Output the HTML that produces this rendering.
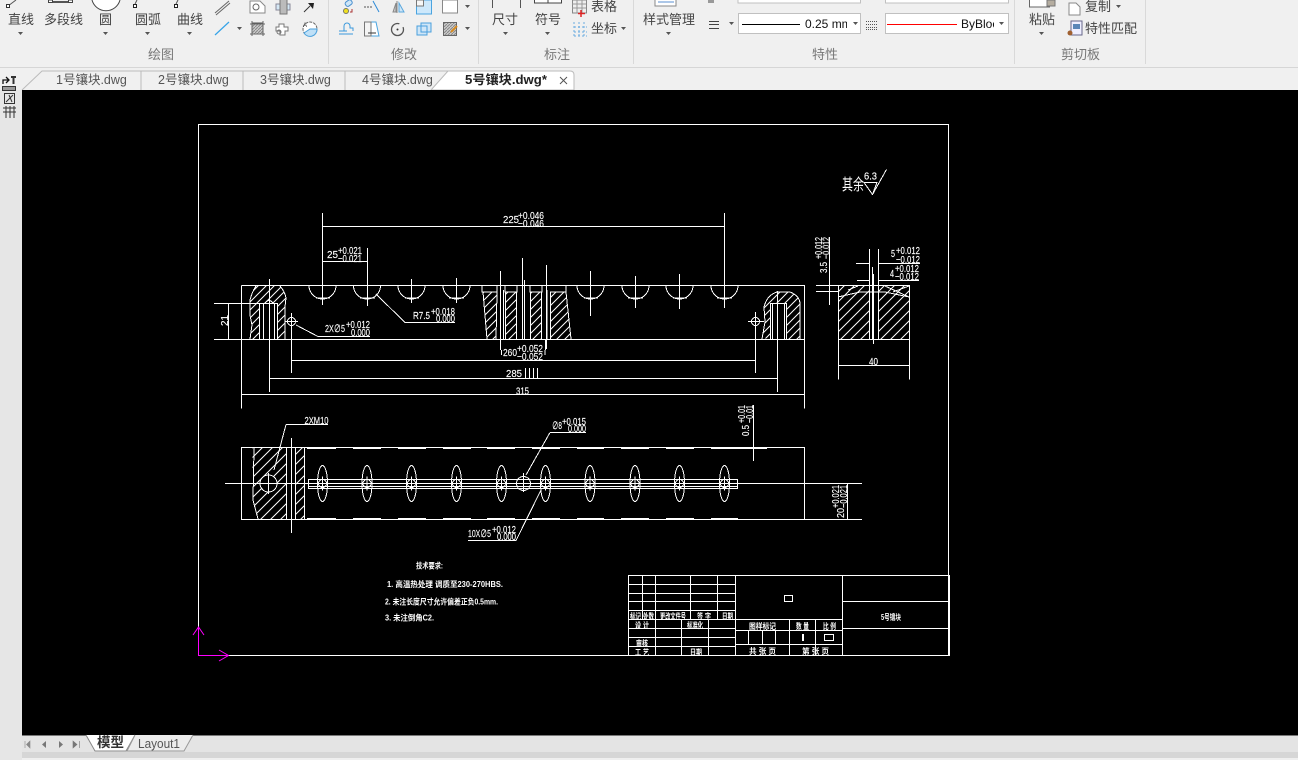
<!DOCTYPE html>
<html lang="zh-CN">
<head>
<meta charset="utf-8">
<title>CAD</title>
<style>
html,body{margin:0;padding:0;width:1298px;height:760px;overflow:hidden;background:#f0f0f0}
svg{position:absolute;left:0;top:0;display:block}
text{font-family:"Liberation Sans","Noto Sans CJK SC",sans-serif}
.l{font-size:13px;fill:#444}
.g{font-size:13px;fill:#777}
.t{font-size:12.5px;fill:#555}
.d{font-size:10.5px;fill:#fff;stroke:#fff;stroke-width:.15}
.m{font-size:8px;fill:#fff;font-weight:700}
.n{font-size:8px;fill:#fff;font-weight:700}
.w{fill:none;stroke:#fff;stroke-width:1}
.ic{fill:none;stroke:#666;stroke-width:1}
.bl{fill:none;stroke:#3aa0e0;stroke-width:1}
</style>
</head>
<body>
<svg width="1298" height="760" viewBox="0 0 1298 760" xmlns="http://www.w3.org/2000/svg">
<defs>
<pattern id="h" width="8" height="8" patternUnits="userSpaceOnUse"><path d="M-1 9L9 -1M-1 1L1 -1M7 9L9 7" stroke="#fff" stroke-width="1" fill="none"/></pattern>
<pattern id="h2" width="10" height="10" patternUnits="userSpaceOnUse"><path d="M-1 11L11 -1M-1 1L1 -1M9 11L11 9" stroke="#fff" stroke-width="1" fill="none"/></pattern>
<pattern id="sh" width="3" height="3" patternUnits="userSpaceOnUse"><rect width="3" height="3" fill="#ccc"/><path d="M0 3L3 0" stroke="#888"/></pattern>
<g id="ov"><ellipse cx="0" cy="0" rx="5" ry="18" class="w"/><circle r="4" class="w"/><path d="M-6 0H6M0 -7V7" class="w"/></g>
<path id="ar" d="M0 0h5l-2.500 3z" fill="#555"/>
</defs>

<!-- Ribbon -->
<rect width="1298" height="67" fill="#f0f0f0"/>
<rect y="67" width="1298" height="1" fill="#d6d6d6"/>
<rect y="68" width="1298" height="23" fill="#f0f0f0"/>
<rect x="0" y="90" width="22" height="670" fill="#e6e6e6"/>
<g fill="#d9d9d9"><rect x="328" width="1" height="64"/><rect x="478" width="1" height="64"/><rect x="633" width="1" height="64"/><rect x="1014" width="1" height="64"/><rect x="1145" width="1" height="64"/></g>

<!-- Draw big icons -->
<g class="ic" stroke="#444">
<path d="M8 6L16 0" stroke="#555" fill="none"/><rect x="6.500" y="4.500" width="3" height="3" fill="#fff" stroke="#333"/>
<path d="M49 2H73" stroke="#555" fill="none" stroke-width="2"/><rect x="48.500" y="0" width="4" height="2.500" fill="#fff" stroke="#444"/><rect x="68.500" y="0" width="4" height="2.500" fill="#fff" stroke="#444"/>
<path d="M92 0A14.500 14.500 0 0 0 120 0" fill="#fff" stroke="#444"/>
<path d="M135 4L137 0" fill="none" stroke="#555"/><rect x="133.500" y="4.500" width="3" height="3" fill="#fff" stroke="#222"/>
<path d="M176 4L178 0" fill="none" stroke="#555"/><rect x="174.500" y="4.500" width="3" height="3" fill="#fff" stroke="#222"/>
</g>
<path d="M215 13L229 1M216 15L230 3" stroke="#666" fill="none"/>
<path d="M215 35L229 22" stroke="#35a3e8" fill="none" stroke-width="1.200"/>
<use href="#ar" x="237" y="27"/>
<path d="M250 1H260L265 6V13H250Z" fill="#fff" stroke="#888"/><circle cx="256" cy="7" r="3" fill="none" stroke="#666"/>
<rect x="252" y="23" width="11" height="11" fill="url(#sh)" stroke="#555"/><path d="M250 24H265M250 34H265M252 21V36M263 21V36" stroke="#666" fill="none"/>
<path d="M276 4H290V10H276Z" fill="#d5e8f5" stroke="#889"/><path d="M280 0V14H287V0" fill="#bbb" stroke="#777"/>
<path d="M279 24h5v3h4v4h-3v4h-5v-4h-4v-4h3z" fill="#fff" stroke="#777"/><circle cx="279" cy="32" r="2" fill="none" stroke="#777"/>
<path d="M304 12L310 6" stroke="#333"/><path d="M308 3L314 3L313 9Z" fill="#222"/>
<circle cx="310" cy="29" r="7" fill="#fff" stroke="#666" stroke-dasharray="3 1"/><path d="M310 29H317A7 7 0 0 1 304 33Z" fill="#bfe0f7" stroke="#4aa0dc"/>
<text x="303" y="27" font-size="6" fill="#333">A</text>

<!-- Modify icons -->
<circle cx="346" cy="11" r="2.500" fill="#f0e020" stroke="#776"/><rect x="345" y="1" width="7" height="5" rx="2" transform="rotate(-35 348 3)" fill="#cfe6f7" stroke="#4a90d0"/><path d="M350 12H352V9" stroke="#a33" fill="none"/>
<path d="M364 7H372" stroke="#555" stroke-dasharray="2 1"/><path d="M373 1L379 12" stroke="#2d8ad8" fill="none"/>
<path d="M397 1V13M396 3L393 12H396Z" stroke="#888" fill="#ccc"/><path d="M399 3L404 12H399Z" fill="#cfe6f7" stroke="#5aa7dd"/>
<rect x="416.500" y="0" width="15" height="14" fill="#cde8fb" stroke="#4aa4e0"/><rect x="416.500" y="0" width="7" height="6" fill="#f7f7f7" stroke="#777"/>
<rect x="442.500" y="0" width="15" height="13" fill="#fff" stroke="#888"/><use href="#ar" x="465" y="5"/>
<path d="M339 34H353M339 31H347M344 31V26A3 3 0 0 1 350 26V28H353V31" fill="none" stroke="#3a99dc"/>
<path d="M364.500 22H376L379 36H364.500Z" fill="#fff" stroke="#4aa4e0"/><path d="M364.500 22H371V36H364.500Z" fill="#f4f4f4" stroke="#777"/><path d="M368 33H376" stroke="#333"/>
<circle cx="397.500" cy="29.500" r="6" fill="none" stroke="#555" stroke-width="1.300" stroke-dasharray="30 5"/><circle cx="397.500" cy="29.500" r="1" fill="#333"/>
<path d="M417 26H427V35H417ZM421 23H431V32H421Z" fill="#cfe6f7" stroke="#4a9fdc"/>
<rect x="443.500" y="22.500" width="13" height="13" fill="url(#sh)" stroke="#666"/><path d="M451 32L457 26" stroke="#d68a20" stroke-width="2"/><use href="#ar" x="465" y="27"/>

<!-- Annotation icons -->
<path d="M492.500 0V8M520.500 0V8" stroke="#555" fill="none"/>
<rect x="534.500" y="-8" width="27" height="11" fill="#fff" stroke="#444"/><path d="M548 -8V3" stroke="#444"/>
<rect x="572.500" y="0" width="14" height="13" fill="#eee" stroke="#888"/><path d="M572 4H586M572 8H586M577 0V13M582 0V13" stroke="#999"/><path d="M581 10V17M578 13.500H585" stroke="#d22" stroke-width="1.500"/>
<path d="M574 22V36M574 36H587M579 22V36M584 22V36M574 27H587M574 32H587" stroke="#6aace0" stroke-dasharray="2 2" fill="none"/>
<rect x="655" y="-5" width="21" height="11" fill="#fff" stroke="#888"/><path d="M658 2H674M658 -1H666" stroke="#5a8fd0"/>

<!-- Properties -->
<rect x="708" y="0" width="6" height="3" fill="#999"/><path d="M709 21.500H719M709 24.500H719M709 28.500H719" stroke="#444" fill="none"/><use href="#ar" x="729" y="22"/>
<rect x="738" y="-10" width="122.500" height="13" fill="#fff" stroke="#c0c0c0"/><rect x="885.500" y="-10" width="123" height="13" fill="#fff" stroke="#c0c0c0"/>
<rect x="738.500" y="13.500" width="122" height="20" fill="#fff" stroke="#c0c0c0"/>
<path d="M742 24.500H800" stroke="#000" fill="none"/><text x="805" y="28" font-size="12" fill="#111">0.25 mm</text>
<rect x="847" y="14" width="13" height="19" fill="#fff"/><use href="#ar" x="853" y="22"/>
<path d="M866 21.500H877M866 24.500H877M866 27.500H877M866 29.500H877" stroke="#555" stroke-dasharray="1 1" fill="none"/>
<rect x="885.500" y="13.500" width="123" height="20" fill="#fff" stroke="#c0c0c0"/>
<path d="M887 24.500H957" stroke="#f00" fill="none"/><text x="961" y="28" font-size="12" fill="#111">ByBloc</text>
<rect x="994" y="14" width="14" height="19" fill="#fff"/><use href="#ar" x="999" y="22"/>

<!-- Clipboard -->
<rect x="1029.500" y="-5" width="20" height="12" fill="#fff" stroke="#666"/><rect x="1047" y="0" width="8" height="6" fill="#b5ada0" stroke="#777"/>
<path d="M1069 3H1076L1080 7V15H1069Z" fill="#fff" stroke="#888"/>
<rect x="1071" y="21" width="11" height="14" fill="#eef" stroke="#668"/><rect x="1073" y="24" width="7" height="5" fill="#5a86b8"/><circle cx="1070" cy="33" r="2.500" fill="#a06030"/>

<!-- Ribbon labels -->
<text class="l" x="8" y="24">直线</text>
<text class="l" x="44" y="24">多段线</text>
<text class="l" x="99" y="24">圆</text>
<text class="l" x="135" y="24">圆弧</text>
<text class="l" x="177" y="24">曲线</text>
<text class="l" x="492" y="24">尺寸</text>
<text class="l" x="535" y="24">符号</text>
<text class="l" x="591" y="11">表格</text>
<text class="l" x="591" y="33">坐标</text>
<text class="l" x="643" y="24">样式管理</text>
<text class="l" x="1029" y="24">粘贴</text>
<text class="l" x="1085" y="11">复制</text>
<text class="l" x="1085" y="33">特性匹配</text>
<text class="g" x="148" y="59">绘图</text>
<text class="g" x="391" y="59">修改</text>
<text class="g" x="544" y="59">标注</text>
<text class="g" x="812" y="59">特性</text>
<text class="g" x="1061" y="59">剪切板</text>
<g>
<use href="#ar" x="18" y="32"/><use href="#ar" x="103" y="32"/><use href="#ar" x="145" y="32"/><use href="#ar" x="187" y="32"/>
<use href="#ar" x="503" y="32"/><use href="#ar" x="545" y="32"/><use href="#ar" x="621" y="27"/><use href="#ar" x="666" y="32"/><use href="#ar" x="1039" y="32"/><use href="#ar" x="1116" y="5"/>
</g>

<!-- Left toolbar icons -->
<path d="M3 84V80H8M6 77L9 80L6 83" fill="none" stroke="#111" stroke-width="1.300"/><path d="M11 77H16M13.500 77V84" stroke="#333" fill="none" stroke-width="2"/>
<rect x="2.500" y="86.500" width="13" height="4" fill="#999" stroke="#333"/>
<rect x="4.500" y="93.500" width="10" height="10" fill="none" stroke="#333"/><path d="M6 102L13 95M9 95L12 102" stroke="#333"/>
<path d="M3 108H16M6 106V118M10 106V118M14 106V118M3 112H16" stroke="#333" fill="none"/>

<!-- Tabs -->
<path d="M22 90L42 71H141V90" fill="#f0f0f0" stroke="#bbb"/>
<path d="M141 90V71H243V90M243 90V71H345V90" fill="none" stroke="#bbb"/>
<path d="M345 71H448" stroke="#bbb"/>
<path d="M431 90L448 71H570Q574 71 574 75V90Z" fill="#fff" stroke="#bbb"/>
<text class="t" x="56" y="84">1号镶块.dwg</text>
<text class="t" x="158" y="84">2号镶块.dwg</text>
<text class="t" x="260" y="84">3号镶块.dwg</text>
<text class="t" x="362" y="84">4号镶块.dwg</text>
<text x="465" y="84" font-size="12.500" font-weight="700" fill="#222" textLength="82" lengthAdjust="spacingAndGlyphs">5号镶块.dwg*</text>
<path d="M560 77L567 84M567 77L560 84" stroke="#555" fill="none"/>

<!-- Canvas -->
<rect x="22" y="90" width="1276" height="645" fill="#000"/>

<g shape-rendering="crispEdges">
<!-- hatches -->
<path d="M250 300Q252 292 256 286H280Q285 292 286 298L285 307V339H277V303H259V339H250L252 325L250 315Z" fill="url(#h)"/>
<path d="M762 338L765 322L764 307Q767 295 777 292H790Q800 296 800 304V339H787V303H770V339Z" fill="url(#h)"/>
<path d="M483 292H497L496 339H487ZM505 292H517V339H505ZM530 292H542V339H530ZM550 292H566L571 339H550Z" fill="url(#h)"/>
<path d="M838 286H869V339H838ZM878 286H910V339H878Z" fill="url(#h2)"/>
<path d="M252 448H287V519H257L254 505ZM296 448H305V519H296Z" fill="url(#h2)"/>
<circle cx="268.500" cy="483" r="8" fill="#000"/>

<g class="w">
<!-- Frame -->
<path d="M198.500 124.500H948.500V655.500H198.500Z"/>
<!-- Main view -->
<path d="M241.500 285.500H804.500V408.500M241.500 285.500V408.500"/>
<path d="M214 303.500H277M214 339.500H804.500M228.500 303.500V339.500"/>
<path d="M309 285.500A13.500 13.500 0 0 0 336 285.500M353.500 285.500A13.500 13.500 0 0 0 380.500 285.500M398 285.500A13.500 13.500 0 0 0 425 285.500M443 285.500A13.500 13.500 0 0 0 470 285.500M577 285.500A13.500 13.500 0 0 0 604 285.500M622 285.500A13.500 13.500 0 0 0 649 285.500M666 285.500A13.500 13.500 0 0 0 693 285.500M711 285.500A13.500 13.500 0 0 0 738 285.500"/>
<path d="M322.500 213V305M322.500 226.500H724.500M724.500 213V308M322.500 261.500H367.500M367.500 248V306M411.500 279V303M456.500 278V303M590.500 271V316M635.500 276V308M679.500 274V309"/>
<path d="M316 298H330M360 298H375M405 298H419M449 298H464M584 298H598M628 298H643M673 298H687M717 298H732"/>
<!-- Left detail -->
<path d="M250 300Q252 292 256 286M280 286Q285 292 286 298L285 307V339M250 300V315L252 325L250 339M259.500 303V339M263.500 303V339M274.500 303V339M277.500 303V339M269.500 279V392"/>
<path d="M265 303Q269 298 273 303"/>
<!-- Right detail -->
<path d="M762 339L765 322L764 307Q767 295 777 292H790Q800 296 800 304V339M770.500 303V339M772.500 303V339M784.500 303V339M786.500 303V339M770 303.500H787M777.500 291V392"/>
<!-- Middle detail -->
<path d="M482 286V292H497L496 339M483 292L487 339M497 286V292M505.500 292V339M516.500 292V339M505 286V292H517V286M530.500 292V339M541.500 292V339M530 286V292H542V286M550.500 292V339M566 286V292L571 339M550 292H566"/>
<path d="M500.500 271V350M503.500 290V339M522.500 258V339M524.500 280V339M546.500 265V349M545.500 339V350M547 290V339"/>
<!-- Holes -->
<circle cx="291.500" cy="321.500" r="4"/><path d="M285 321.500H298M291.500 313V373"/>
<circle cx="755.500" cy="321.500" r="4"/><path d="M748 321.500H764M755.500 312V373"/>
<path d="M296 325L318 336.500H370M376 294L405 322.500H455"/>
<!-- Long dims -->
<path d="M291 360.500H755M269 378.500H777M241.500 394.500H804.500M501.500 350V355M545 350V355"/>
<path d="M525.500 368V378M529.500 368V378M533.500 368V378M537.500 368V378"/>
<!-- Right view -->
<path d="M838.500 285.500H909.500V339.500H838.500ZM838.500 339.500V379.500M909.500 339.500V379.500M838.500 365.500H909.500"/>
<path d="M869.500 249V339M872.500 267V339M878.500 249V339M873.500 274V344"/>
<path d="M856 263.500H869M878.500 263.500H920M857 280.500H869M878.500 280.500H919M829.500 237V305M816 285.500H838M816 291.500H838"/>
<path d="M838 297L860 292H885L909 297M885 286L909 297M848 290L858 286M893 292L909 286"/>
<!-- Roughness -->
<path d="M864 182.500H877L872.500 194.500L864 182.500M872.500 194.500L886.500 169.500"/>
<!-- Bottom view -->
<path d="M241.500 447.500H804.500V519.500H241.500ZM225 483.500H862M804 519.500H862M254 448L253 500L258 519M286.500 448V519M291.500 438V533M295.500 448V519M304.500 448V519"/>
<circle cx="268.500" cy="483.500" r="8.500"/><path d="M259 483.500H278M268.500 473V494"/>
<path d="M308.500 479.500H737.500V488.500H308.500ZM308.500 486.500H737.500"/>
<circle cx="523.500" cy="483.500" r="7"/><path d="M514 483.500H533M523.500 473V492"/>
<path d="M286 424.500H328M286 424.500L274 470M550 432.500H586M550 432.500L526 475M468 540.500H516L541 490M753.500 405V461M847.500 484V519"/>
</g>

<!-- dashed thick edges -->
<g stroke="#fff" stroke-width="2" fill="none">
<path d="M307 448H336M353 448H381M398 448H426M443 448H471M487 448H515M532 448H560M577 448H604M621 448H649M666 448H694M711 448H767"/>
<path d="M307 519H336M353 519H381M398 519H426M443 519H471M487 519H515M532 519H560M577 519H604M621 519H649M666 519H694M711 519H738"/>
</g>

<use href="#ov" x="322.500" y="483.500"/><use href="#ov" x="367" y="483.500"/><use href="#ov" x="411.500" y="483.500"/><use href="#ov" x="456.500" y="483.500"/><use href="#ov" x="501.500" y="483.500"/><use href="#ov" x="545.500" y="483.500"/><use href="#ov" x="590" y="483.500"/><use href="#ov" x="635" y="483.500"/><use href="#ov" x="679.500" y="483.500"/><use href="#ov" x="724.500" y="483.500"/>

<!-- Title block -->
<g class="w">
<path d="M628.500 575.500H949.500V655.500H628.500ZM735.500 575.500V655.500M842.500 575.500V655.500"/>
<path d="M628 584.500H735M628 593.500H735M628 601.500H735M628 610.500H735M628 619.500H842M628 628.500H735M628 637.500H735M628 646.500H735"/>
<path d="M642.500 575V619M655.500 575V655M690.500 575V619M717.500 575V619M681.500 619V655M708.500 619V655"/>
<path d="M735 630.500H842M735 644.500H842M789.500 619V655M815.500 619V655M748.500 630V644M762.500 630V644M775.500 630V644"/>
<path d="M842 601.500H948M842 628.500H948"/>
<rect x="784.500" y="595.500" width="8" height="6"/><rect x="824.500" y="634.500" width="9" height="6"/>
<path d="M802.500 634V641M803.500 634V641"/>
</g>
</g>

<!-- Dimension text -->
<g>
<text class="d" x="503" y="223" textLength="16" lengthAdjust="spacingAndGlyphs">225</text>
<text class="d" x="518" y="219" textLength="26" lengthAdjust="spacingAndGlyphs">+0.046</text>
<text class="d" x="518" y="227" textLength="26" lengthAdjust="spacingAndGlyphs">−0.046</text>
<text class="d" x="327" y="258" textLength="11" lengthAdjust="spacingAndGlyphs">25</text>
<text class="d" x="338" y="254" textLength="24" lengthAdjust="spacingAndGlyphs">+0.021</text>
<text class="d" x="338" y="262" textLength="24" lengthAdjust="spacingAndGlyphs">−0.021</text>
<text class="d" x="413" y="319" textLength="17" lengthAdjust="spacingAndGlyphs">R7.5</text>
<text class="d" x="431" y="315" textLength="24" lengthAdjust="spacingAndGlyphs">+0.018</text>
<text class="d" x="436" y="322" textLength="19" lengthAdjust="spacingAndGlyphs">0.000</text>
<text class="d" x="325" y="332" textLength="20" lengthAdjust="spacingAndGlyphs">2X∅5</text>
<text class="d" x="346" y="328" textLength="24" lengthAdjust="spacingAndGlyphs">+0.012</text>
<text class="d" x="351" y="336" textLength="19" lengthAdjust="spacingAndGlyphs">0.000</text>
<text class="d" x="503" y="356" textLength="14" lengthAdjust="spacingAndGlyphs">260</text>
<text class="d" x="517" y="352" textLength="26" lengthAdjust="spacingAndGlyphs">+0.052</text>
<text class="d" x="517" y="360" textLength="26" lengthAdjust="spacingAndGlyphs">−0.052</text>
<text class="d" x="506" y="377" textLength="16" lengthAdjust="spacingAndGlyphs">285</text>
<text class="d" x="516" y="394.500" textLength="13" lengthAdjust="spacingAndGlyphs">315</text>
<text class="d" x="869" y="365" textLength="9" lengthAdjust="spacingAndGlyphs">40</text>
<text class="d" x="891" y="257" textLength="4" lengthAdjust="spacingAndGlyphs">5</text>
<text class="d" x="896" y="254" textLength="24" lengthAdjust="spacingAndGlyphs">+0.012</text>
<text class="d" x="896" y="263" textLength="24" lengthAdjust="spacingAndGlyphs">−0.012</text>
<text class="d" x="890" y="277" textLength="4" lengthAdjust="spacingAndGlyphs">4</text>
<text class="d" x="895" y="272" textLength="24" lengthAdjust="spacingAndGlyphs">+0.012</text>
<text class="d" x="895" y="280" textLength="24" lengthAdjust="spacingAndGlyphs">−0.012</text>
<text class="d" x="864" y="179.500" textLength="13" lengthAdjust="spacingAndGlyphs">6.3</text>
<text x="842" y="190" font-size="16" fill="#fff" textLength="22" lengthAdjust="spacingAndGlyphs">其余</text>
<text class="d" x="304.500" y="424" textLength="24" lengthAdjust="spacingAndGlyphs">2XM10</text>
<text class="d" x="552" y="429" textLength="10" lengthAdjust="spacingAndGlyphs">∅8</text>
<text class="d" x="562" y="425" textLength="24" lengthAdjust="spacingAndGlyphs">+0.015</text>
<text class="d" x="568" y="432" textLength="18" lengthAdjust="spacingAndGlyphs">0.000</text>
<text class="d" x="468" y="537" textLength="23" lengthAdjust="spacingAndGlyphs">10X∅5</text>
<text class="d" x="492" y="533" textLength="24" lengthAdjust="spacingAndGlyphs">+0.012</text>
<text class="d" x="497" y="540" textLength="19" lengthAdjust="spacingAndGlyphs">0.000</text>
<text class="d" transform="translate(228,326) rotate(-90)" textLength="11" lengthAdjust="spacingAndGlyphs">21</text>
<text class="d" transform="translate(827,273) rotate(-90)" textLength="11" lengthAdjust="spacingAndGlyphs">3.5</text>
<text class="d" transform="translate(822,259) rotate(-90)" textLength="22" lengthAdjust="spacingAndGlyphs">+0.012</text>
<text class="d" transform="translate(829.500,259) rotate(-90)" textLength="22" lengthAdjust="spacingAndGlyphs">−0.012</text>
<text class="d" transform="translate(749,436) rotate(-90)" textLength="11" lengthAdjust="spacingAndGlyphs">0.5</text>
<text class="d" transform="translate(745,423) rotate(-90)" textLength="18" lengthAdjust="spacingAndGlyphs">+0.01</text>
<text class="d" transform="translate(753,423) rotate(-90)" textLength="18" lengthAdjust="spacingAndGlyphs">−0.01</text>
<text class="d" transform="translate(844,518) rotate(-90)" textLength="10" lengthAdjust="spacingAndGlyphs">20</text>
<text class="d" transform="translate(839,508) rotate(-90)" textLength="23" lengthAdjust="spacingAndGlyphs">+0.021</text>
<text class="d" transform="translate(847,508) rotate(-90)" textLength="23" lengthAdjust="spacingAndGlyphs">−0.021</text>
</g>

<!-- Technical notes -->
<text class="n" x="416" y="568.500" textLength="27" lengthAdjust="spacingAndGlyphs">技术要求:</text>
<text class="n" x="387" y="587" textLength="116" lengthAdjust="spacingAndGlyphs">1. 高温热处理 调质至230-270HBS.</text>
<text class="n" x="385" y="604.500" textLength="113" lengthAdjust="spacingAndGlyphs">2. 未注长度尺寸允许偏差正负0.5mm.</text>
<text class="n" x="385" y="620.500" textLength="49" lengthAdjust="spacingAndGlyphs">3. 未注倒角C2.</text>

<!-- Title block text -->
<g>
<text class="m" x="630" y="619" textLength="11" lengthAdjust="spacingAndGlyphs">标记</text>
<text class="m" x="643" y="619" textLength="11" lengthAdjust="spacingAndGlyphs">处数</text>
<text class="m" x="660" y="619" textLength="26" lengthAdjust="spacingAndGlyphs">更改文件号</text>
<text class="m" x="697" y="619" textLength="14" lengthAdjust="spacingAndGlyphs">签 字</text>
<text class="m" x="722" y="619" textLength="11" lengthAdjust="spacingAndGlyphs">日期</text>
<text class="m" x="635" y="628" textLength="14" lengthAdjust="spacingAndGlyphs">设 计</text>
<text class="m" x="687" y="628" textLength="16" lengthAdjust="spacingAndGlyphs">标准化</text>
<text class="m" x="636" y="646" textLength="12" lengthAdjust="spacingAndGlyphs">审核</text>
<text class="m" x="635" y="655" textLength="14" lengthAdjust="spacingAndGlyphs">工 艺</text>
<text class="m" x="690" y="655" textLength="12" lengthAdjust="spacingAndGlyphs">日期</text>
<text class="m" x="749" y="629" textLength="27" lengthAdjust="spacingAndGlyphs">图样标记</text>
<text class="m" x="796" y="629" textLength="13" lengthAdjust="spacingAndGlyphs">数 量</text>
<text class="m" x="823" y="629" textLength="13" lengthAdjust="spacingAndGlyphs">比 例</text>
<text class="m" x="749" y="654" textLength="27" lengthAdjust="spacingAndGlyphs">共 张 页</text>
<text class="m" x="802" y="654" textLength="27" lengthAdjust="spacingAndGlyphs">第 张 页</text>
<text class="m" x="881" y="620" textLength="20" lengthAdjust="spacingAndGlyphs">5号镶块</text>
</g>

<!-- UCS -->
<g stroke="#f0f" fill="none">
<path d="M198.500 627V655.500H228" stroke-width="1"/>
<path d="M193 635L198.500 627L204 635M219 650L228.500 655.500L219 661"/>
</g>

<!-- Bottom bar -->
<rect x="22" y="735" width="1276" height="25" fill="#e4e4e4"/>
<rect x="22" y="735" width="1276" height="1" fill="#777"/>
<rect x="22" y="752" width="1276" height="6" fill="#d6d6d6"/>
<rect x="22" y="758" width="1276" height="2" fill="#efefef"/>
<path d="M25 741V748M26.500 744.500L30 741V748Z" fill="#888" stroke="#888" stroke-width=".6"/>
<path d="M46 741V748L42 744.500Z" fill="#777"/>
<path d="M59 741V748L63 744.500Z" fill="#777"/>
<path d="M73 741V748L77 744.500ZM79.500 741V748" fill="#777" stroke="#777" stroke-width=".6"/>
<path d="M86 735L95 751H126L135 735" fill="#fff" stroke="#888"/>
<path d="M135 735L127 751H184L193 735" fill="#ececec" stroke="#999"/>
<text x="97" y="747" font-size="13.500" font-weight="700" fill="#333">模型</text>
<text x="138" y="748" font-size="12.500" fill="#555" textLength="42" lengthAdjust="spacingAndGlyphs">Layout1</text>
</svg>
</body>
</html>
